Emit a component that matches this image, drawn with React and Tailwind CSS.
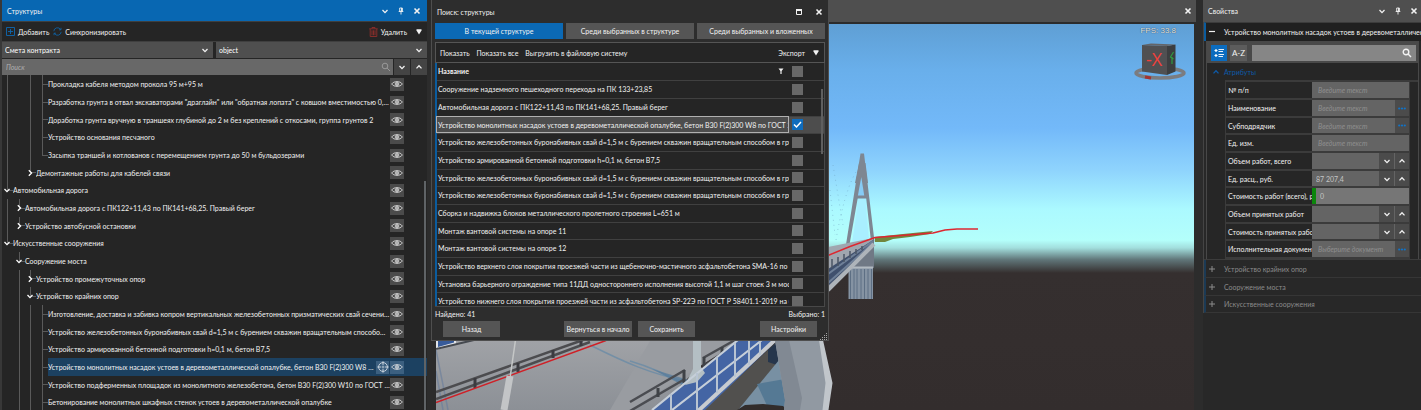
import React from "react";

const Chevron = ({ dir = "down", className = "" }) => {
  const d = {
    down: "M1.5 3 4 5.6 6.5 3",
    up: "M1.5 5.4 4 2.8 6.5 5.4",
    right: "M2.8 1.2 5.6 4 2.8 6.8",
  }[dir];
  return (
    <svg viewBox="0 0 8 8" className={"h-2 w-2 shrink-0 " + className} fill="none" stroke="currentColor" strokeWidth="1.3" aria-hidden="true">
      <path d={d} />
    </svg>
  );
};

const Close = () => (
  <svg viewBox="0 0 8 8" className="h-2 w-2" fill="none" stroke="currentColor" strokeWidth="1.6" aria-hidden="true">
    <path d="M1.5 1.5l5 5M6.5 1.5l-5 5" />
  </svg>
);

const Pin = () => (
  <svg viewBox="0 0 8 8" className="h-2 w-2" fill="none" stroke="currentColor" strokeWidth="0.9" aria-hidden="true">
    <path d="M2.7 1h2.6v3.2H2.7zM1.7 4.5h4.6M4 4.5V7.5" />
    <path d="M4.7 1v3" strokeWidth="1.2" />
  </svg>
);

const Triangle = () => (
  <svg viewBox="0 0 8 8" className="h-2 w-2" fill="currentColor" aria-hidden="true">
    <path d="M1.5 1.2h5v1.4L4 6.4 1.5 2.6z" />
  </svg>
);

const Funnel = () => (
  <svg viewBox="0 0 8 8" className="h-2 w-2 shrink-0" fill="currentColor" aria-hidden="true">
    <path d="M1.5 1.5h5L4.6 4v3H3.4V4z" />
  </svg>
);

const Magnifier = ({ flip }) => (
  <svg viewBox="0 0 10 10" className="h-[10px] w-[10px]" fill="none" stroke="currentColor" strokeWidth={flip ? "1.4" : "0.8"} aria-hidden="true">
    <circle cx="4" cy="4" r="2.8" />
    <path d="M6.1 6.1 9 9" />
  </svg>
);

const Eye = () => (
  <svg viewBox="0 0 12 8" className="h-2 w-3" fill="none" stroke="currentColor" strokeWidth="0.8" aria-hidden="true">
    <path d="M0.6 4C3 .8 9 .8 11.4 4 9 7.2 3 7.2.6 4z" />
    <circle cx="6" cy="4" r="1.8" />
    <circle cx="6" cy="4" r="0.6" fill="currentColor" />
  </svg>
);

const Target = () => (
  <svg viewBox="0 0 12 12" className="h-3 w-3" fill="none" stroke="currentColor" strokeWidth="0.8" aria-hidden="true">
    <circle cx="6" cy="6" r="4.4" />
    <path d="M6 .3v4M6 7.7v4M.3 6h4M7.7 6h4" />
    <circle cx="6" cy="6" r="0.5" />
  </svg>
);

const IconButton = ({ label, className = "", children }) => (
  <button type="button" aria-label={label} className={"flex shrink-0 items-center justify-center " + className}>
    {children}
  </button>
);

const TREE = [
  ["| |├", "Прокладка кабеля методом прокола 95 м+95 м"],
  ["| |├", "Разработка грунта в отвал экскаваторами \"драглайн\" или \"обратная лопата\" с ковшом вместимостью 0,65…"],
  ["| |├", "Доработка грунта вручную в траншеях глубиной до 2 м без креплений с откосами, группа грунтов 2"],
  ["| |├", "Устройство основания песчаного"],
  ["| |└", "Засыпка траншей и котлованов с перемещением грунта до 50 м бульдозерами"],
  ["| >", "Демонтажные работы для кабелей связи"],
  ["v", "Автомобильная дорога"],
  ["|>", "Автомобильная дорога с ПК122+11,43 по ПК141+68,25. Правый берег"],
  ["|>", "Устройство автобусной остановки"],
  ["v", "Искусственные сооружения"],
  [" v", "Сооружение моста"],
  [" |>", "Устройство промежуточных опор"],
  [" |v", "Устройство крайних опор"],
  [" ||├", "Изготовление, доставка и забивка копром вертикальных железобетонных призматических свай сечением…"],
  [" ||├", "Устройство железобетонных буронабивных свай d=1,5 м с бурением скважин вращательным способом в…"],
  [" ||├", "Устройство армированной бетонной подготовки h=0,1 м, бетон B7,5"],
  [" ||├", "Устройство монолитных насадок устоев в деревометаллической опалубке, бетон B30 F(2)300 W8 по Г…", true],
  [" ||├", "Устройство подферменных площадок из монолитного железобетона, бетон B30 F(2)300 W10 по ГОСТ 266…"],
  [" ||├", "Бетонирование монолитных шкафных стенок устоев в деревометаллической опалубке"],
];

function Guide({ kind, last }) {
  const width = last ? "w-[6px]" : "w-[12px] nth-2:w-[11px]";
  const line = kind !== " ";
  const lower = kind === "|" || kind === "├";
  const stub = kind === "├" || kind === "└" || kind === ">" || kind === "v";
  return (
    <span className={"relative flex shrink-0 flex-col self-stretch " + width}>
      <span className={"flex-1 border-[#5a5a5a] " + (line ? "border-l " : "") + (stub ? "border-b" : "")} />
      <span className={"flex-1 border-[#5a5a5a] " + (lower ? "border-l" : "")} />
      {(kind === ">" || kind === "v") && (
        <button type="button" aria-label="Развернуть" className="absolute inset-y-0 -left-1 flex items-center text-white">
          <Chevron dir={kind === ">" ? "right" : "down"} />
        </button>
      )}
    </span>
  );
}

function TreeRow({ guides, text, selected }) {
  return (
    <li className="flex h-[18px] items-center pl-[5px] nth-[3n]:h-[17px]">
      {[...guides].map((g, i) => (
        <Guide key={i} kind={g} last={i === guides.length - 1} />
      ))}
      <div className={"flex min-w-0 flex-1 items-center self-stretch pr-[23px] " + (selected ? "bg-[#1c4161]" : "")}>
        <span className="min-w-0 flex-1 truncate">{text}</span>
        {selected && (
          <IconButton label="Показать на модели" className="mr-px h-[13px] w-[13px] bg-[#3c6080] text-[#dfe6ec]"><Target /></IconButton>
        )}
        <IconButton label="Видимость" className={"h-[13px] w-[14px] text-[#e4e4e4] " + (selected ? "bg-[#3c6080]" : "bg-[#4b4b4b]")}><Eye /></IconButton>
      </div>
    </li>
  );
}

function Dropdown({ label, value }) {
  return (
    <label className="relative flex h-4 min-w-0 flex-1 items-center bg-[#4f4f4f]">
      <select aria-label={label} className="h-full w-full appearance-none px-[3px] text-[7px] text-white outline-none">
        <option>{value}</option>
      </select>
      <span className="pointer-events-none absolute right-1"><Chevron /></span>
    </label>
  );
}

function StructurePanel() {
  return (
    <section className="flex w-[427px] shrink-0 flex-col overflow-hidden border-l-2 border-[#383838] bg-[#252525]">
      <header className="flex h-[21px] shrink-0 items-center bg-[#0867b2] pr-[6px] pl-[5px]">
        <h2 className="flex-1">Структуры</h2>
        <div className="flex gap-2">
          <IconButton label="Меню"><Chevron /></IconButton>
          <IconButton label="Закрепить"><Pin /></IconButton>
          <IconButton label="Закрыть"><Close /></IconButton>
        </div>
      </header>
      <div className="flex h-[21px] shrink-0 items-center gap-1 border-y border-[#3f3f3f] px-1">
        <button type="button" className="flex items-center gap-[3px]">
          <svg viewBox="0 0 9 9" className="h-[9px] w-[9px]" fill="none" stroke="#0e68b0" strokeWidth="0.9" aria-hidden="true">
            <path d="M.5.5h8v8h-8zM4.5 2v5M2 4.5h5" />
          </svg>
          Добавить
        </button>
        <button type="button" className="flex items-center gap-[3px]">
          <svg viewBox="0 0 9 9" className="h-[9px] w-[9px]" fill="none" stroke="#0e68b0" strokeWidth="0.8" aria-hidden="true">
            <path d="M.8 4.2A3.7 3.7 0 0 1 7.7 2.6M8 .8v2H6M8.2 4.8a3.7 3.7 0 0 1-6.9 1.6M1 8.2v-2h2" />
          </svg>
          Синхронизировать
        </button>
        <button type="button" className="ml-auto flex items-center gap-[3px]">
          <svg viewBox="0 0 9 10" className="h-[10px] w-[9px]" fill="none" stroke="#8e2f2b" strokeWidth="0.9" aria-hidden="true">
            <path d="M.3 1.8h8.4M3 1.6V.5h3v1.1M1.2 2v7.5h6.6V2M3 3.3v5M4.5 3.3v5M6 3.3v5" />
          </svg>
          Удалить
        </button>
        <IconButton label="Ещё" className="ml-1"><Triangle /></IconButton>
      </div>
      <div className="flex shrink-0 gap-[3px]">
        <Dropdown label="Смета" value="Смета контракта" />
        <Dropdown label="Объект" value="object" />
      </div>
      <div className="mt-px flex h-4 shrink-0 gap-px">
        <label className="flex min-w-0 flex-1 items-center bg-[#686868] pr-[2px] text-[#a5a5a5]">
          <input aria-label="Поиск" placeholder="Поиск" className="h-full min-w-0 flex-1 px-1 text-[7px] italic outline-none placeholder:text-[#b0b0b0]" />
          <Magnifier />
        </label>
        <IconButton label="Следующий" className="w-4 bg-[#444444]"><Chevron /></IconButton>
        <IconButton label="Предыдущий" className="w-4 bg-[#444444]"><Chevron dir="up" /></IconButton>
      </div>
      <div className="relative min-h-0 flex-1 overflow-hidden">
        <ul>
          {TREE.map(([guides, text, selected], i) => (
            <TreeRow key={i} guides={guides} text={text} selected={selected} />
          ))}
        </ul>
        <span className="absolute top-[106px] right-px bottom-0 w-[2px] bg-[#5f6366]" />
      </div>
    </section>
  );
}

const FOUND = [
  "Сооружение надземного пешеходного перехода на ПК 133+23,85",
  "Автомобильная дорога с ПК122+11,43 по ПК141+68,25. Правый берег",
  "Устройство монолитных насадок устоев в деревометаллической опалубке, бетон B30 F(2)300 W8 по ГОСТ 2663",
  "Устройство железобетонных буронабивных свай d=1,5 м с бурением скважин вращательным способом в грун",
  "Устройство армированной бетонной подготовки h=0,1 м, бетон B7,5",
  "Устройство железобетонных буронабивных свай d=1,5 м с бурением скважин вращательным способом в грун",
  "Устройство железобетонных буронабивных свай d=1,5 м с бурением скважин вращательным способом в грун",
  "Сборка и надвижка блоков металлического пролетного строения L=651 м",
  "Монтаж вантовой системы на опоре 11",
  "Монтаж вантовой системы на опоре 12",
  "Устройство верхнего слоя покрытия проезжей части из щебеночно-мастичного асфальтобетона SMA-16 по ГС",
  "Установка барьерного ограждение типа 11ДД одностороннего исполнения высотой 1,1 м шаг стоек 3 м мосто",
  "Устройство нижнего слоя покрытия проезжей части из асфальтобетона SP-22Э по ГОСТ Р 58401.1-2019 на бит",
];

function Check({ label, on }) {
  return (
    <span className="relative flex h-[11px] w-[11px]">
      <input type="checkbox" aria-label={label} defaultChecked={on} className="peer h-[11px] w-[11px] appearance-none bg-[#686868] checked:bg-[#0f6cbd]" />
      <svg viewBox="0 0 11 11" className="pointer-events-none absolute inset-0 hidden h-[11px] w-[11px] peer-checked:block" fill="none" stroke="#fff" strokeWidth="1.5" aria-hidden="true">
        <path d="M2 5.5 4.5 8 9 3" />
      </svg>
    </span>
  );
}

const DialogButton = ({ className = "", children }) => (
  <button type="button" className={"h-4 bg-[#555555] text-center " + className}>{children}</button>
);

function SearchDialog() {
  return (
    <section role="dialog" aria-label="Поиск: структуры" className="absolute top-0 left-0 flex w-[398px] flex-col border border-t-0 border-[#4e4e4e] bg-[#2d2d2d] px-[3px] pb-[3px]">
      <header className="flex h-[23px] shrink-0 items-center pr-[2px] pl-[2px]">
        <h2 className="flex-1">Поиск: структуры</h2>
        <div className="flex gap-3">
          <IconButton label="Развернуть окно">
            <svg viewBox="0 0 8 8" className="h-2 w-2" fill="none" stroke="currentColor" aria-hidden="true">
              <path d="M1.5 2v4.5h5V2" />
              <path d="M1 2h6" strokeWidth="2" />
            </svg>
          </IconButton>
          <IconButton label="Закрыть"><Close /></IconButton>
        </div>
      </header>
      <div role="tablist" className="grid h-4 shrink-0 grid-cols-3 gap-[3px]">
        <button type="button" role="tab" aria-selected="true" className="bg-[#0b69b5]">В текущей структуре</button>
        <button type="button" role="tab" aria-selected="false" className="bg-[#555555]">Среди выбранных в структуре</button>
        <button type="button" role="tab" aria-selected="false" className="bg-[#555555]">Среди выбранных и вложенных</button>
      </div>
      <div className="mt-[3px] flex h-[21px] shrink-0 items-center gap-[7px] border border-[#555555] bg-[#252525] px-1">
        <button type="button">Показать</button>
        <button type="button">Показать все</button>
        <button type="button">Выгрузить в файловую систему</button>
        <button type="button" className="ml-auto">Экспорт</button>
        <IconButton label="Ещё"><Triangle /></IconButton>
      </div>
      <div className="relative h-[244px] shrink-0 overflow-hidden border-r border-b border-[#484848] bg-[#252525]">
        <table className="w-full table-fixed border-collapse border-l-2 border-[#0b5c9e]">
          <thead>
            <tr className="h-[17px] border-b border-[#404040]">
              <th scope="col" className="p-0 pl-px text-left font-bold">
                <span className="flex items-center justify-between pr-1">Название <Funnel /></span>
              </th>
              <th scope="col" className="w-[35px] p-0 pl-[3px]"><Check label="Выбрать все" /></th>
            </tr>
          </thead>
          <tbody>
            {FOUND.map((name, i) => (
              <tr key={i} className={"h-[18px] border-b border-[#404040] nth-[3n]:h-[17px] " + (i === 2 ? "bg-[#4d4d4d]" : "")}>
                <td className={"overflow-hidden p-0 pl-px whitespace-nowrap " + (i === 2 ? "outline outline-1 -outline-offset-1 outline-[#b0b0b0]" : "")}>
                  {name}
                </td>
                <td className="p-0 pl-[3px]"><Check label={name} on={i === 2} /></td>
              </tr>
            ))}
          </tbody>
        </table>
        <span className="absolute top-[26px] right-px h-[65px] w-[2px] bg-[#5f5f5f]" />
      </div>
      <div className="flex h-[14px] shrink-0 items-center justify-between">
        <span>Найдено: 41</span>
        <span>Выбрано: 1</span>
      </div>
      <footer className="flex shrink-0 px-2">
        <DialogButton className="w-[57px]">Назад</DialogButton>
        <DialogButton className="ml-auto w-[68px]">Вернуться в начало</DialogButton>
        <DialogButton className="ml-[6px] w-[57px]">Сохранить</DialogButton>
        <DialogButton className="ml-[65px] w-[57px]">Настройки</DialogButton>
      </footer>
      <svg viewBox="0 0 8 8" className="absolute right-0 bottom-0 h-2 w-2" fill="#a8a8a8" aria-hidden="true">
        <path d="M6 1h1v1H6zM4 3h1v1H4zM6 3h1v1H6zM2 5h1v1H2zM4 5h1v1H4zM6 5h1v1H6zM0 7h1v1H0zM2 7h1v1H2zM4 7h1v1H4zM6 7h1v1H6z" />
      </svg>
    </section>
  );
}

function Scene() {
  return (
    <svg viewBox="436 24 758 386" preserveAspectRatio="xMinYMin slice" className="h-full w-full" role="img" aria-label="Модель моста">
      <defs>
        <linearGradient id="sky" x1="0" y1="24" x2="0" y2="410" gradientUnits="userSpaceOnUse">
          <stop offset="0" stopColor="#5f9fd4" />
          <stop offset="0.12" stopColor="#69afeb" />
          <stop offset="0.27" stopColor="#73b9f9" />
          <stop offset="0.38" stopColor="#8fd4fd" />
          <stop offset="0.48" stopColor="#abf9ff" />
          <stop offset="0.56" stopColor="#b4fffb" />
          <stop offset="0.58" stopColor="#a2dedd" />
          <stop offset="0.61" stopColor="#61777a" />
          <stop offset="0.645" stopColor="#352f2f" />
          <stop offset="1" stopColor="#332d2d" />
        </linearGradient>
        <linearGradient id="deck" x1="0" y1="0" x2="0" y2="1">
          <stop offset="0" stopColor="#a3a5a9" />
          <stop offset="1" stopColor="#8c9096" />
        </linearGradient>
      </defs>
      <path d="M436 24h758v386H436z" fill="url(#sky)" />

      <path d="M860.5 153.5h3.5l10.5 88h-3.5l-5-45h-8l-8.500 48h-3.500z" fill="#7e8792" />
      <path d="M859 163h6.500l2.500 20h-13z" fill="#7e8792" />
      <path d="M861.3 177l-3.500 19h6.500z" fill="#87ccf5" />
      <path d="M858.500 199.500h6.500l4 39-17 4z" fill="#a9efff" />
      <path d="M857 197h10" stroke="#7e8792" strokeWidth="3" />
      <path d="M836 240c5-30 12-55 20-68M830 190l5 45M833 165l10 60" stroke="#6d9dbd" strokeWidth="0.500" strokeDasharray="1 4" fill="none" />
      <path d="M848 262l10-12 16-12v30h-26z" fill="#707985" />
      <path d="M848.500 267h24.500v32h-24.500z" fill="#8593a3" />
      <path d="M850.500 269v30M854 269v30M857 269v30M861 269v30M864.500 269v30M868 269v30M871.500 269v30" stroke="#5d6f84" strokeWidth="1" />
      <path d="M848 267.500h25" stroke="#b2bac1" strokeWidth="2" />
      <path d="M828 247l45-9v7l-45 47z" fill="#a0a6af" />
      <path d="M828 269l45-29v4l-45 42z" fill="#40506d" />
      <path d="M828 274l45-33M828 283l45-40" stroke="#6f8098" strokeWidth="2" />
      <path d="M828 290l46-46" stroke="#aeb4ba" strokeWidth="4" />
      <path d="M832 259v9M838 257v9M844 254v8M850 251v7M856 249v5M862 246v4" stroke="#4b5666" strokeWidth="1.5" />
      <path d="M875 237l28-3 30-3-3 3-20 3-17 2-8 3h-10z" fill="#71863c" />
      <path d="M828 255.500l22-9 25-9 58-4.500 12-3 12-1h21" fill="none" stroke="#dd2730" strokeWidth="1.400" />

      <path d="M436 330h300l-80 80H436z" fill="url(#deck)" />
      <path d="M650 341h90l-110 69h-20z" fill="#999ca1" />
      <path d="M436 340h20v4l-20 6z" fill="#e1e4e8" />
      <path d="M438 340h16v2.500l-16 4.500z" fill="#375b9a" />
      <path d="M436 349l38-9" stroke="#464a50" strokeWidth="2" />
      <path d="M436 350l12 60M436 371l7 39" stroke="#687d9c" strokeWidth="1.500" opacity="0.6" />
      <path d="M590 345c34 17 60 29 100 37M630 361c24 7 40 15 55 24" stroke="#5f87a8" strokeWidth="1.500" opacity="0.65" fill="none" />
      <path d="M652 369l40 12-8 5z" fill="#547a9b" opacity="0.7" />
      <path d="M436 392l147-52M436 399l154-57" stroke="#4c4c4f" strokeWidth="2.500" fill="none" />
      <path d="M475 378v10M518 363v9M553 350v8M581 340v6" stroke="#3b3b40" strokeWidth="3" />
      <path d="M436 402.500l170-62" stroke="#cf2027" strokeWidth="1.500" />
      <path d="M515.500 340l-5.500 38" stroke="#c5c7c7" strokeWidth="1.500" />
      <path d="M510 376l-6 34" stroke="#c3c5c7" strokeWidth="7" />
      <path d="M630 402l55-32M630 411l55-32M703 358l32-18M703 366l32-18" stroke="#4a4c51" strokeWidth="2.500" />
      <path d="M658 388v9M684 370v13M704 357v10M722 347v9" stroke="#3f4247" strokeWidth="3" />
      <path d="M652 410l85-70h40l-70 70z" fill="#4465a4" />
      <path d="M693 340h8v27l4 6-8 9-12 3 8-16z" fill="#b4bfc4" />
      <path d="M672 410l90-70M652 410l86-70" stroke="#c6cfd9" strokeWidth="2.200" />
      <path d="M697 412l78-72" stroke="#c7cbd0" strokeWidth="4" />
      <path d="M671 394v16M697 373v37M717 357v36M735 343v34M749 340v25M760 340v15" stroke="#b8c4d2" strokeWidth="2" />
      <path d="M705 410l71-68 3 20-41 48z" fill="#51504e" />
      <path d="M768 350l9-8 3 24-12-4z" fill="#26364c" />
      <path d="M738 410l41-50 10 50z" fill="#7890a3" />
      <path d="M757 384l28-5 4 31h-20z" fill="#557994" />
      <path d="M737 410l8-5 18-1 20 2 4 4z" fill="#322d2c" />
      <path d="M775 340h47l10 44-5 26h-43l1-10z" fill="#9199a2" />
      <path d="M775 340h14l13 58-2 12h-16l1-10z" fill="#818993" />
      <path d="M819 340h4l9.500 43-4 27h-6l3-27z" fill="#c1c6cb" />

      <ellipse cx="1160" cy="73" rx="24" ry="5" fill="none" stroke="#7b7c80" strokeWidth="3.500" />
      <path d="M1145 77l6 1" stroke="#a23332" strokeWidth="3" />
      <path d="M1142 45l25 1v29l-25-3.500z" fill="#505052" />
      <path d="M1167 46l8.500-1.500v27l-8.500 3.500z" fill="#3c3e40" />
      <path d="M1142 45l9-1.500 24.500 1-8.500 1.500z" fill="#646568" />
      <path d="M1173.500 52l-3 5 3 2M1172 57v7" stroke="#2f9c43" strokeWidth="1.200" fill="none" />
      <text x="1146" y="66" fontSize="18" fontFamily="Open Sans, sans-serif" fill="#f0403c">-X</text>
    </svg>
  );
}

const FIELDS = [
  ["№ п/п", "text"],
  ["Наименование", "more"],
  ["Субподрядчик", "more"],
  ["Ед. изм.", "text"],
  ["Объем работ, всего", "number", ""],
  ["Ед. расц., руб.", "number", "87 207,4"],
  ["Стоимость работ (всего), р", "calc", "0"],
  ["Объем принятых работ", "number", ""],
  ["Стоимость принятых рабо", "number", ""],
  ["Исполнительная документ", "doc"],
];

function Field({ label, kind, value, id }) {
  const more = kind === "more" || kind === "doc";
  const placeholder = kind === "doc" ? "Выберите документ" : kind === "text" || kind === "more" ? "Введите текст" : undefined;
  return (
    <div className="flex h-[18px] border-b-2 border-[#3b3b3b] nth-[3n]:h-[17px]">
      <label htmlFor={id} className="flex w-[86px] shrink-0 items-center pl-[2px] whitespace-nowrap">{label}</label>
      <div className={"flex min-w-0 flex-1 " + (kind === "calc" ? "border-l-4 border-[#0b860b] bg-[#767676]" : "bg-[#646464]")}>
        <input
          id={id}
          defaultValue={value}
          placeholder={placeholder}
          className={"min-w-0 flex-1 text-[7px] text-[#c4c4c4] outline-none placeholder:text-[#8f8f8f] placeholder:italic " + (placeholder ? "px-[6px]" : "px-1")}
        />
        {more && <IconButton label="Выбрать" className="w-[14px] bg-[#4b4b4b]">
          <svg viewBox="0 0 8 3" className="h-[3px] w-2" fill="#1173c8" aria-hidden="true"><circle cx="1.2" cy="1.500" r="1.100" /><circle cx="4" cy="1.500" r="1.100" /><circle cx="6.800" cy="1.500" r="1.100" /></svg>
        </IconButton>}
        {kind === "number" && (
          <>
            <IconButton label="Уменьшить" className="w-[15px] bg-[#4b4b4b]"><Chevron /></IconButton>
            <IconButton label="Увеличить" className="ml-px w-[14px] bg-[#4b4b4b]"><Chevron dir="up" /></IconButton>
          </>
        )}
      </div>
    </div>
  );
}

function PropertiesPanel() {
  return (
    <section className="flex w-[218px] shrink-0 flex-col overflow-hidden bg-[#282828]">
      <header className="flex h-[22px] shrink-0 items-center bg-[#4f4f4f] pr-[3px] pl-[5px]">
        <h2 className="flex-1">Свойства</h2>
        <div className="flex gap-2">
          <IconButton label="Меню"><Chevron /></IconButton>
          <IconButton label="Закрепить"><Pin /></IconButton>
          <IconButton label="Закрыть"><Close /></IconButton>
        </div>
      </header>
      <div className="border-l border-[#444444]">
        <button type="button" className="flex h-[19px] w-full items-center gap-[9px] border-t border-l-2 border-t-[#3c3c3c] border-l-[#0b5c9e] bg-[#202020] pl-[3px] text-left whitespace-nowrap">
          <svg viewBox="0 0 6 6" className="h-[6px] w-[6px] shrink-0" stroke="currentColor" strokeWidth="1.200" aria-hidden="true"><path d="M0 2.500h6" /></svg>
          Устройство монолитных насадок устоев в деревометаллическо
        </button>
        <div className="mx-[2px] border border-b-0 border-[#484848] bg-[#262626]">
          <div className="flex h-[21px] items-center gap-[3px] bg-[#494949] pr-[2px] pl-1">
            <IconButton label="По категориям" className="h-4 w-4 bg-[#0b6cbf]">
              <svg viewBox="0 0 10 10" className="h-[10px] w-[10px]" fill="none" stroke="#fff" aria-hidden="true">
                <path d="M.5 2.500h3M2 1v3M.5 7.500h3M2 6v3" strokeWidth="1.200" />
                <path d="M4.500 1.500H10M4.500 3.500H9M4.500 6.500H10M4.500 8.500H9" strokeWidth="0.900" />
              </svg>
            </IconButton>
            <button type="button" className="h-4 w-[17px] bg-[#5c5c5c] text-[8px]">A-Z</button>
            <label className="ml-[2px] flex h-4 min-w-0 flex-1 items-center bg-[#868686] pr-1">
              <input aria-label="Поиск свойства" className="min-w-0 flex-1 px-1 text-[7px] outline-none" />
              <Magnifier flip />
            </label>
          </div>
          <h3 className="flex h-[17px] items-center gap-1 pl-[5px] text-[#0d5aa8]"><Chevron dir="up" />Атрибуты</h3>
          <div className="ml-[18px] border-t-2 border-l border-[#3b3b3b]">
            <div className="mr-2 border-r border-[#3b3b3b]">
              {FIELDS.map(([label, kind, value], i) => (
                <Field key={label} id={"field-" + i} label={label} kind={kind} value={value} />
              ))}
            </div>
          </div>
        </div>
        <div className="border-t border-[#3c3c3c] text-[#8b8b8b]">
          {["Устройство крайних опор", "Сооружение моста", "Искусственные сооружения"].map((name) => (
            <button type="button" key={name} className="flex h-[18px] w-full items-center gap-[9px] border-b border-l-2 border-b-[#363636] border-l-[#1b3a55] pl-[3px] text-left nth-[3n]:h-[17px]">
              <svg viewBox="0 0 6 6" className="h-[6px] w-[6px] shrink-0" stroke="currentColor" aria-hidden="true"><path d="M0 3h6M3 0v6" /></svg>
              {name}
            </button>
          ))}
        </div>
      </div>
    </section>
  );
}

export default function App() {
  return (
    <div className="flex h-screen overflow-hidden bg-[#2c2c2c] font-['Lato','Open_Sans',sans-serif] text-[7px] leading-[10px] text-[#f2f2f2]">
      <StructurePanel />
      <main className="relative ml-1 flex min-w-0 flex-1 flex-col">
        <header className="mr-[7px] flex h-[22px] shrink-0 items-center justify-end bg-[#4f4f4f] pr-1">
          <IconButton label="Закрыть"><Close /></IconButton>
        </header>
        <div className="relative mt-[2px] mr-[9px] ml-[5px] min-h-0 flex-1 overflow-hidden">
          <Scene />
          <span className="absolute top-[2px] right-[18px] font-['Liberation_Sans',sans-serif] text-[8px] text-[#e7eef3] [text-shadow:0_0_1px_#000]">FPS: 33.8</span>
        </div>
        <SearchDialog />
      </main>
      <PropertiesPanel />
    </div>
  );
}
